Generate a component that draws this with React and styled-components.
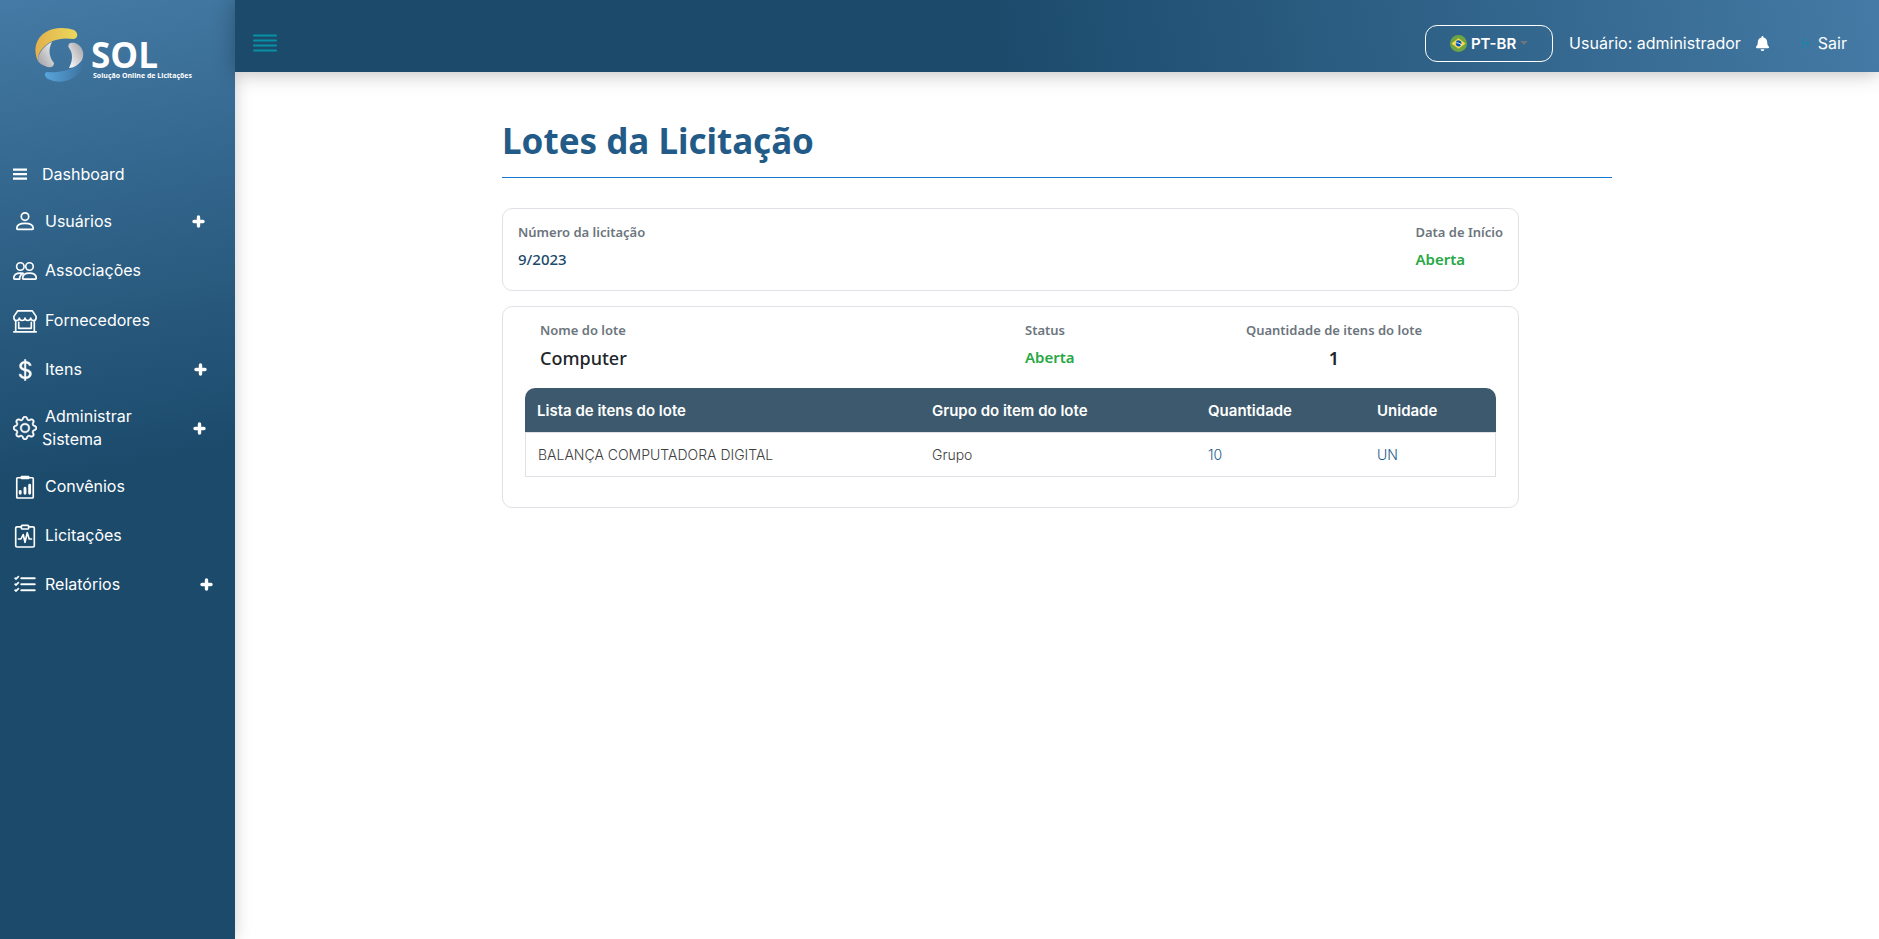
import React from 'react';
import styled, { createGlobalStyle } from 'styled-components';
import { BsCurrencyDollar, BsGear, BsListCheck } from 'react-icons/bs';
import { FaBell } from 'react-icons/fa';

const display = `Inter, "Open Sans", sans-serif`;
const body = `"Noto Sans", "Open Sans", sans-serif`;

const GlobalStyle = createGlobalStyle`
  *, *::before, *::after { box-sizing: border-box; }
  body { margin: 0; background: #fff; color: #212529; font-family: ${body}; }
  a { color: inherit; text-decoration: none; }
  button { font: inherit; color: inherit; background: none; border: 0; padding: 0; cursor: pointer; }
`;

const Shell = styled.div`
  display: grid;
  grid-template-columns: 235px minmax(0, 1fr);
  min-height: 100vh;
`;

const Sidebar = styled.aside`
  background: linear-gradient(170deg, #447aa5 0%, #1b4a6b 50%);
  box-shadow: 0 0 16px rgba(0, 0, 0, 0.2);
  color: #fff;
  font-family: ${display};
`;

const Brand = styled.a`
  display: block;
  height: 150px;
  padding: 26px 0 0 33px;
`;

const Menu = styled.ul`
  list-style: none;
  margin: 0;
  padding: 0;
`;

const MenuItem = styled.li`
  display: flex;
  align-items: center;
  height: ${(p) => p.$height}px;
  padding: 0 ${(p) => p.$end}px 0 13px;
`;

const MenuLink = styled.a`
  display: flex;
  flex: 1;
  align-items: center;
  gap: ${(p) => (p.$compact ? 12 : 5)}px;
  font-size: 16px;
  line-height: 23px;
  svg { flex: none; }
`;

const Label = styled.span`
  width: min-content;
  text-indent: 3px;
`;

const PlusButton = styled.button`
  display: flex;
`;

const Main = styled.div`
  display: flex;
  flex-direction: column;
`;

const TopBar = styled.header`
  display: flex;
  align-items: center;
  height: 72px;
  padding: 14px 32px 0 18px;
  background: linear-gradient(80deg, #1b4a6b 46%, #447aa5 100%);
  box-shadow: 0 0 20px rgba(0, 0, 0, 0.3);
  color: #fff;
  font: 16px ${display};
`;

const Toggle = styled.button`
  display: flex;
  margin-right: auto;
  color: #0891a5;
`;

const Language = styled.button`
  display: flex;
  align-items: center;
  justify-content: center;
  gap: 4px;
  width: 128px;
  height: 37px;
  margin-right: 16px;
  border: 1px solid #fff;
  border-radius: 12px;
  font-weight: 600;
  font-size: 15px;
`;

const User = styled.span`
  margin-right: 14px;
`;

const BellButton = styled.button`
  display: flex;
  margin-right: 32px;
`;

const Exit = styled.a`
  display: flex;
  align-items: center;
  gap: 8px;
  svg { color: #1288a6; }
`;

const Content = styled.main`
  width: 1110px;
  max-width: 100%;
  margin: 0 auto;
  padding-top: 41px;
`;

const Title = styled.h1`
  margin: 0 0 30px;
  padding-bottom: 8px;
  border-bottom: 1px solid #1976d2;
  color: #225b87;
  font-size: 35px;
  line-height: 56px;
`;

const Card = styled.section`
  width: 1017px;
  max-width: 100%;
  margin-bottom: 15px;
  padding: ${(p) => p.$padding};
  border: 1px solid #dee2e6;
  border-radius: 10px;
`;

const Summary = styled.dl`
  display: flex;
  justify-content: space-between;
  margin: 0;
`;

const LotSummary = styled.dl`
  display: grid;
  grid-template-columns: 485px 198px 222px;
  margin: 0 0 16px 15px;
`;

const Field = styled.div`
  text-align: ${(p) => p.$align || 'left'};
  dt {
    color: #6c757d;
    font-size: 13px;
    font-weight: 600;
    line-height: 24px;
  }
  dd {
    margin: 2px 0 0;
    color: ${(p) => p.$color || '#212529'};
    font-size: ${(p) => (p.$large ? 18 : 15)}px;
    font-weight: ${(p) => p.$weight || 600};
    line-height: ${(p) => (p.$large ? 28 : 26)}px;
  }
`;

const Table = styled.table`
  width: 100%;
  table-layout: fixed;
  border-collapse: separate;
  border-spacing: 0;
  font-family: ${display};
  font-size: 14px;
  text-align: left;
  th {
    height: 44px;
    padding: 0 12px;
    background: #3c596d;
    color: #fff;
    font-size: 15px;
    font-weight: 600;
  }
  th:first-child { border-top-left-radius: 10px; }
  th:last-child { border-top-right-radius: 10px; }
  td {
    height: 45px;
    padding: 0 12px;
    border: solid #dee2e6;
    border-width: 1px 0;
    color: #404040;
    font-weight: 300;
  }
  td:first-child { border-left-width: 1px; }
  td:last-child { border-right-width: 1px; }
  td:nth-child(n + 3) { color: #225b87; }
`;

const LineIcon = ({ size, children }) => (
  <svg width={size} height={size} viewBox="0 0 16 16" fill="none" stroke="currentColor" strokeWidth="1.1" strokeLinejoin="round" strokeLinecap="round" aria-hidden="true">
    {children}
  </svg>
);

const BarsIcon = () => (
  <svg width="14" height="12" viewBox="0 0 14 12" fill="currentColor" aria-hidden="true">
    <path d="M0 0.5h14v2.2H0zM0 5h14v2.2H0zM0 9.5h14v2.2H0z" />
  </svg>
);

const PersonIcon = ({ size }) => (
  <LineIcon size={size}>
    <circle cx="8" cy="4.4" r="2.5" />
    <path d="M2.5 12.3C2.5 10.3 4.6 8.9 8 8.9S13.5 10.3 13.5 12.3Q13.5 12.9 12.9 12.9H3.1Q2.5 12.9 2.5 12.3Z" />
  </LineIcon>
);

const PeopleIcon = ({ size }) => (
  <LineIcon size={size}>
    <circle cx="11" cy="5" r="2.5" />
    <path d="M6.4 12.8C6.4 10.8 8 9.4 11 9.4S15.5 10.8 15.5 12.8Q15.5 13.4 15 13.4H7Q6.4 13.4 6.4 12.8Z" />
    <circle cx="4.9" cy="5" r="2.5" />
    <path d="M4.4 13.4H1Q.5 13.4 .5 12.8C.5 10.8 2.2 9.4 4.9 9.4Q5.8 9.4 6.6 9.6" />
    <path d="M4.4 13.4C4.4 11.7 5.2 10.3 6.6 9.6" />
  </LineIcon>
);

const ShopIcon = ({ size }) => (
  <LineIcon size={size}>
    <path d="M3.2 1.2H12.8L15.4 4.9V5.8C15.4 8.3 12 8.3 11.8 6C11.6 8.2 8.2 8.2 8 6C7.8 8.2 4.4 8.2 4.2 6C4 8.3.6 8.3.6 5.8V4.9Z" />
    <path d="M1.8 8V15M14.2 8V15M.5 15.2H15.5M3.8 8.8V12.9H12.2V8.8" />
  </LineIcon>
);

const ClipboardDataIcon = ({ size }) => (
  <LineIcon size={size}>
    <path d="M5 1.8H3.1Q2.5 1.8 2.5 2.4V14.6Q2.5 15.3 3.1 15.3H12.9Q13.5 15.3 13.5 14.6V2.4Q13.5 1.8 12.9 1.8H11" />
    <path d="M5.6 1h4.8v1.3H5.6z" fill="currentColor" />
    <path d="M4.8 10.9v1.3M8 8.8v3.4M11.1 6.8v5.4" strokeWidth="1.9" />
  </LineIcon>
);

const ClipboardPulseIcon = ({ size }) => (
  <LineIcon size={size}>
    <path d="M5.3 1.9H2.7Q1.8 1.9 1.8 2.7V14.5Q1.8 15.3 2.7 15.3H13.3Q14.2 15.3 14.2 14.5V2.7Q14.2 1.9 13.3 1.9H10.7" />
    <rect x="5.6" y="0.9" width="4.8" height="2.4" rx="0.5" />
    <path d="M3.6 10H5.3L6.8 7L8 12.2L9.5 5.8L10.8 10H12.4" />
  </LineIcon>
);

const PlusIcon = () => (
  <svg width="13" height="13" viewBox="0 0 13 13" stroke="currentColor" strokeWidth="3.4" strokeLinecap="round" aria-hidden="true">
    <path d="M6.5 2v9M2 6.5h9" />
  </svg>
);

const MenuIcon = () => (
  <svg width="24" height="18" viewBox="0 0 24 18" stroke="currentColor" strokeWidth="2" strokeLinecap="round" aria-hidden="true">
    <path d="M1 1.5h22M1 6.5h22M1 11.5h22M1 16.5h22" />
  </svg>
);

const ExitIcon = () => (
  <svg width="8" height="9" viewBox="0 0 8 9" fill="none" stroke="currentColor" aria-hidden="true">
    <path d="M3 .5H.5v8H3M2 4.5h5M5 2.5l2 2-2 2" />
  </svg>
);

const menu = [
  { label: 'Dashboard', icon: BarsIcon, height: 48, compact: true },
  { label: 'Usuários', icon: PersonIcon, height: 47, end: 30 },
  { label: 'Associações', icon: PeopleIcon, height: 51 },
  { label: 'Fornecedores', icon: ShopIcon, height: 49 },
  { label: 'Itens', icon: BsCurrencyDollar, height: 49, end: 28, heavy: true },
  { label: 'Administrar Sistema', icon: BsGear, height: 68, end: 29, heavy: true },
  { label: 'Convênios', icon: ClipboardDataIcon, height: 49 },
  { label: 'Licitações', icon: ClipboardPulseIcon, height: 49 },
  { label: 'Relatórios', icon: BsListCheck, height: 49, end: 22, heavy: true },
];

const items = [{ name: 'BALANÇA COMPUTADORA DIGITAL', group: 'Grupo', quantity: '10', unit: 'UN' }];

function Logo() {
  return (
    <svg width="170" height="60" viewBox="0 0 170 60" role="img" aria-label="SOL">
      <defs>
        <linearGradient id="gold"><stop stopColor="#e2b04e" /><stop offset="1" stopColor="#ebd95b" /></linearGradient>
        <linearGradient id="blue"><stop stopColor="#5aa5dd" /><stop offset="1" stopColor="#3b719e" /></linearGradient>
        <linearGradient id="silverA" x1="0" y1="1" x2="1" y2="0"><stop stopColor="#9d9da3" /><stop offset="1" stopColor="#f4f4f4" /></linearGradient>
        <linearGradient id="silverB" x1="0" y1="1" x2="1" y2="0"><stop stopColor="#fff" /><stop offset="1" stopColor="#9d9da3" /></linearGradient>
      </defs>
      <path d="M5 35C0 25 2 12 13 6C20 1 33 1 41 4C46 7 45 13 40 13C27 11 16 15 10 22C6 26 5 30 5 35Z" fill="url(#gold)" />
      <path d="M19 16C15 23 16 31 21 37C21 42 16 42 12 40C7 38 5 36 5 34C5 27 12 19 19 16Z" fill="url(#silverA)" />
      <path d="M36 42C40 34 40 27 36 22C34 18 37 16 42 17C50 20 52 28 49 34C46 39 41 42 36 42Z" fill="url(#silverB)" />
      <path d="M14 46C24 47 35 45 43 40C48 37 51 33 51 28C53 39 48 48 38 53C30 57 21 56 15 53C11 50 11 47 14 46Z" fill="url(#blue)" />
      <text x="58" y="42" fill="#fff" fontFamily="Open Sans, sans-serif" fontWeight="700" fontSize="35">SOL</text>
      <text x="60" y="52" fill="#fff" fontFamily="Open Sans, sans-serif" fontWeight="700" fontSize="7">Solução Online de Licitações</text>
    </svg>
  );
}

function Flag() {
  return (
    <svg width="17" height="17" viewBox="0 0 512 512" aria-hidden="true">
      <circle cx="256" cy="256" r="256" fill="#6da544" />
      <path d="M256 100 467 256 256 412 45 256Z" fill="#ffda44" />
      <circle cx="256" cy="256" r="88" fill="#f0f0f0" />
      <path d="M212 250c-16 0-30 2-44 7 1 48 40 87 88 87 30 0 57-15 73-38-28-34-70-56-117-56zM343 273a88 88 0 0 0-171-43c55-14 120 2 171 43z" fill="#0052b4" />
    </svg>
  );
}

export default function App() {
  return (
    <>
      <GlobalStyle />
      <Shell>
        <Sidebar>
          <Brand href="#"><Logo /></Brand>
          <nav>
            <Menu>
              {menu.map(({ label, icon: Icon, height, end, compact, heavy }) => (
                <MenuItem key={label} $height={height} $end={end || 0}>
                  <MenuLink href="#" $compact={compact}>
                    <Icon size={24} aria-hidden="true" {...(heavy ? { strokeWidth: 0.3 } : {})} />
                    <Label>{label}</Label>
                  </MenuLink>
                  {end && <PlusButton aria-label={`Expandir ${label}`}><PlusIcon /></PlusButton>}
                </MenuItem>
              ))}
            </Menu>
          </nav>
        </Sidebar>
        <Main>
          <TopBar>
            <Toggle aria-label="Menu"><MenuIcon /></Toggle>
            <Language>
              <Flag />
              PT-BR
              <svg width="8" height="4" viewBox="0 0 8 4" aria-hidden="true"><path d="M0 0h8L4 4z" fill="#6c757d" /></svg>
            </Language>
            <User>Usuário: administrador</User>
            <BellButton aria-label="Notificações"><FaBell size={15} /></BellButton>
            <Exit href="#"><ExitIcon />Sair</Exit>
          </TopBar>
          <Content>
            <Title>Lotes da Licitação</Title>
            <Card $padding="11px 15px 18px">
              <Summary>
                <Field $color="#1b4a6b" $weight={500}><dt>Número da licitação</dt><dd>9/2023</dd></Field>
                <Field $color="#28a745"><dt>Data de Início</dt><dd>Aberta</dd></Field>
              </Summary>
            </Card>
            <Card $padding="11px 22px 30px">
              <LotSummary>
                <Field $large $weight={500}><dt>Nome do lote</dt><dd>Computer</dd></Field>
                <Field $color="#28a745"><dt>Status</dt><dd>Aberta</dd></Field>
                <Field $large $align="center"><dt>Quantidade de itens do lote</dt><dd>1</dd></Field>
              </LotSummary>
              <Table>
                <colgroup><col width="395" /><col width="276" /><col width="169" /><col /></colgroup>
                <thead>
                  <tr>
                    <th>Lista de itens do lote</th><th>Grupo do item do lote</th><th>Quantidade</th><th>Unidade</th>
                  </tr>
                </thead>
                <tbody>
                  {items.map((item) => (
                    <tr key={item.name}>
                      <td>{item.name}</td><td>{item.group}</td><td>{item.quantity}</td><td>{item.unit}</td>
                    </tr>
                  ))}
                </tbody>
              </Table>
            </Card>
          </Content>
        </Main>
      </Shell>
    </>
  );
}
